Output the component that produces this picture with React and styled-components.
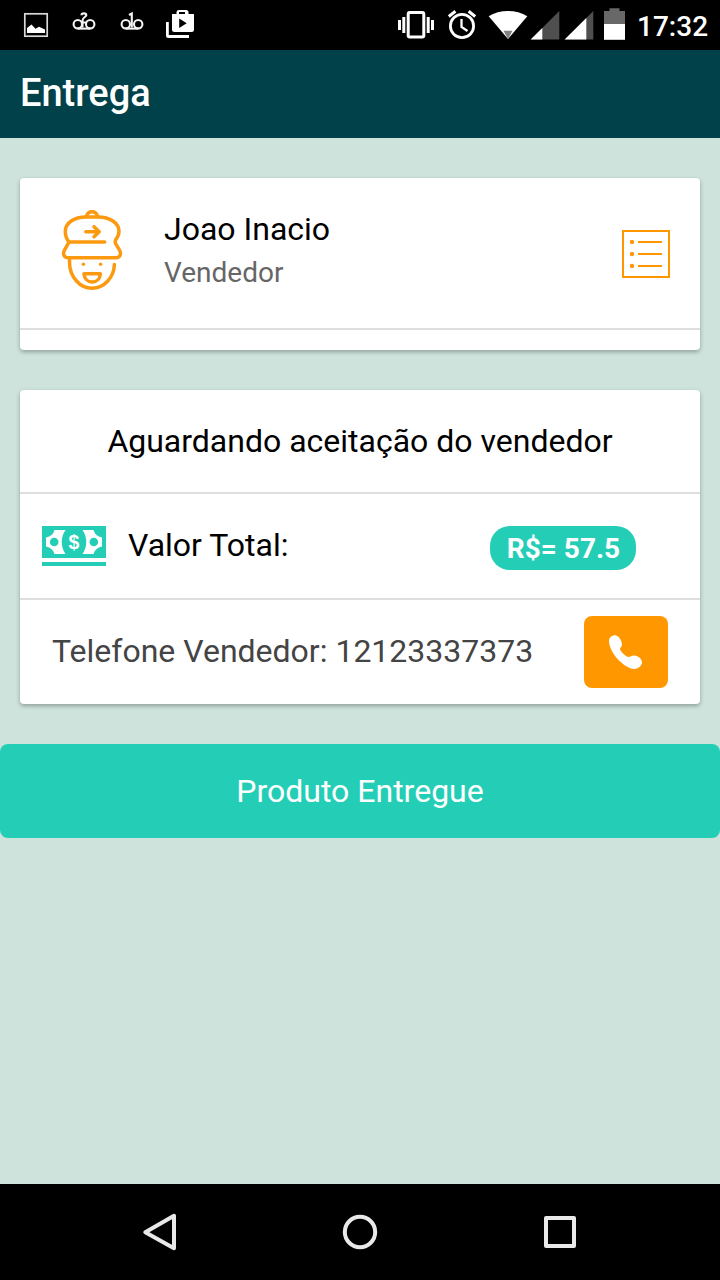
import React from 'react';
import styled, { createGlobalStyle } from 'styled-components';

const teal = '#24ceb6';
const orange = '#ff9800';

const GlobalStyle = createGlobalStyle`
  * {
    box-sizing: border-box;
  }

  body {
    margin: 0;
    font-family: Roboto, sans-serif;
    background: #cee3dc;
  }

  svg {
    display: block;
    flex: none;
  }
`;

const Screen = styled.div`
  display: flex;
  flex-direction: column;
  width: 720px;
  height: 1280px;
  overflow: hidden;
  background: #cee3dc;
`;

const StatusBar = styled.div`
  display: flex;
  justify-content: space-between;
  flex: none;
  height: 50px;
  padding: 0 12px;
  background: #000;
`;

const StatusGroup = styled.div`
  display: flex;
`;

const Clock = styled.time`
  padding-left: 7px;
  width: 78px;
  font-size: 28px;
  font-weight: 500;
  line-height: 53px;
  color: #fff;
  white-space: nowrap;
`;

const Toolbar = styled.header`
  display: flex;
  align-items: center;
  flex: none;
  height: 88px;
  padding: 0 20px;
  background: #014149;
`;

const ToolbarTitle = styled.h1`
  margin: 0;
  padding-bottom: 2px;
  font-size: 38px;
  font-weight: 500;
  color: #fff;
`;

const Content = styled.main`
  flex: 1;
  padding-top: 40px;
`;

const Card = styled.section`
  margin: 0 20px 40px;
  padding-bottom: ${({ $bottom }) => $bottom || 0}px;
  border-radius: 4px;
  background: #fff;
  box-shadow: 0 2px 4px rgba(0, 0, 0, 0.3);
`;

const Item = styled.div`
  display: flex;
  align-items: center;
  height: ${({ $height }) => $height}px;
  padding: ${({ $padding }) => $padding || '0 32px'};
  border-bottom: ${({ $last }) => ($last ? 'none' : '2px solid #dedede')};
`;

const Person = styled.div`
  flex: 1;
  padding: 2px 0 0 40px;
`;

const Name = styled.h2`
  margin: 0;
  font-size: 32px;
  font-weight: 400;
  line-height: 43px;
  color: #000;
`;

const Role = styled.p`
  margin: 0;
  font-size: 28px;
  line-height: 43px;
  color: #666;
`;

const Heading = styled.h2`
  flex: 1;
  margin: 0;
  font-size: 32px;
  font-weight: 400;
  text-align: center;
  color: #000;
`;

const Label = styled.span`
  flex: 1;
  padding-left: ${({ $indent }) => $indent || 0}px;
  padding-bottom: 2px;
  font-size: 32px;
  color: ${({ $color }) => $color || '#000'};
  white-space: nowrap;
`;

const Badge = styled.span`
  width: 146px;
  height: 44px;
  margin-top: 4px;
  padding-left: 1px;
  border-radius: 20px;
  font-size: 28px;
  font-weight: 700;
  line-height: 45px;
  text-align: center;
  color: #fff;
  background: ${teal};
`;

const CallButton = styled.button`
  display: flex;
  align-items: center;
  justify-content: center;
  width: 84px;
  height: 72px;
  padding: 0;
  border: 0;
  border-radius: 8px;
  background: ${orange};
`;

const DeliverButton = styled.button`
  display: block;
  width: 100%;
  height: 94px;
  padding: 0;
  border: 0;
  border-radius: 8px;
  font-family: inherit;
  font-size: 32px;
  color: #fff;
  background: ${teal};
`;

const NavBar = styled.nav`
  display: flex;
  align-items: center;
  justify-content: space-between;
  flex: none;
  height: 96px;
  padding: 0 136px;
  background: #000;
`;

const PictureIcon = () => (
  <svg width="48" height="50">
    <rect x="12.8" y="13.8" width="22.4" height="22.4" fill="none" stroke="#d8d8d8" strokeWidth="1.7" />
    <path d="M15 33V28l4.5-3.5 4 4.2 3.5-2 6 2.8V33z" fill="#fff" />
  </svg>
);

const digits = {
  1: 'M21 15l2.800-1.500v14',
  2: 'M21.500 15.200c0-2.400 4.800-2.400 4.800 0 0 1.800-3.800 2-3.800 5.300v7M22.500 22.500h4',
};

const VoicemailIcon = ({ line }) => (
  <svg width="48" height="50" fill="none" stroke="#f4f4f4" strokeWidth="2.100">
    <circle cx="17.800" cy="24.200" r="4.200" />
    <circle cx="30.200" cy="24.200" r="4.200" />
    <path d="M17.800 28.600h12.400" />
    <path d={digits[line]} />
  </svg>
);

const StoreIcon = () => (
  <svg width="48" height="50" fill="#fff">
    <path
      fillRule="evenodd"
      d="M16 14h4.500v-1.500a2.500 2.500 0 0 1 2.500-2.500h7a2.500 2.500 0 0 1 2.500 2.500V14H38v15.500a2.500 2.500 0 0 1-2.500 2.500h-17a2.500 2.500 0 0 1-2.500-2.500zM23 14h6v-2h-6zM23.200 18.500v9.500l7.500-4.700z"
    />
    <path d="M10 22h2.800v13H33v3H12.500a2.500 2.500 0 0 1-2.500-2.500z" />
  </svg>
);

const VibrateIcon = () => (
  <svg width="48" height="50" fill="#fff">
    <rect x="16.200" y="12.500" width="15.600" height="24.500" rx="1.500" fill="none" stroke="#fff" strokeWidth="3" />
    <path d="M6 20h3v10H6zM10.300 17h3v16h-3zM34.700 17h3v16h-3zM39 20h3v10h-3z" />
  </svg>
);

const AlarmIcon = () => (
  <svg width="44" height="50" fill="none" stroke="#fff">
    <circle cx="22" cy="26" r="11.600" strokeWidth="2.800" />
    <path d="M8.800 16.500l6.600-5.200M35.200 16.500l-6.600-5.200" strokeWidth="3" />
    <path d="M21.500 19v8l6 4" strokeWidth="2.300" />
  </svg>
);

const WifiIcon = () => (
  <svg width="46" height="50">
    <path d="M4.700 16.300C15.500 9.300 32.500 9.300 43.300 16.300L24 39z" fill="#fff" />
    <path d="M19.500 30.800h9L24 39z" fill="#808080" />
  </svg>
);

const SignalIcon = ({ level }) => (
  <svg width="34" height="50">
    <path d="M.7 39.500L29.300 11v28.500z" fill="#4f4f4f" />
    <path d={`M.7 39.500L${level} ${40.2 - level}V39.500z`} fill="#fff" />
  </svg>
);

const BatteryIcon = () => (
  <svg width="32" height="50">
    <path d="M6 11h5.500V8.200h10V11H27v13H6z" fill="#686868" />
    <path d="M6 24h21v15.800H6z" fill="#fff" />
  </svg>
);

const SellerIcon = () => (
  <svg width="64" height="84" fill="none" stroke="#fb9a10" strokeWidth="3.500" strokeLinecap="round" strokeLinejoin="round">
    <path d="M26.500 8.200C28 2.200 36 2.200 37.500 8.200" />
    <path d="M9 34C6.500 31 5.300 27.500 5.300 23.500C5.300 15 14 8.900 26 8.900h12C50 8.900 59 15 59 23.500c0 3.500-1.300 5.500-3.200 8.300-.9 1.400-.9 2.500 0 4L59.500 42.200c2.200 4 .3 7.600-3.800 7.600H8.300c-4.100 0-6-3.600-3.800-7.600z" />
    <path d="M9 34h35.700M25.800 23.700h13.300M34 18.700l5.200 5-5.200 5" />
    <path d="M9.500 51v3C9.500 69 20 80.300 32 80.300S54 69.500 54.400 56.500" />
    <path d="M24 65.800h16.400C40 70.500 37 74 32.200 74S24.400 70.500 24 65.800z" />
    <g fill="#fb9a10" stroke="none">
      <circle cx="23.400" cy="56.300" r="1.700" />
      <circle cx="40.600" cy="56.300" r="1.700" />
    </g>
  </svg>
);

const ListBox = styled.svg`
  margin-top: 8px;
`;

const ListIcon = () => (
  <ListBox width="48" height="48" fill={orange}>
    <rect x="1" y="1" width="46" height="46" fill="none" stroke={orange} strokeWidth="2" />
    {[12, 24, 36].map(y => (
      <g key={y}>
        <circle cx="10" cy={y} r="2.200" />
        <rect x="16" y={y - 1} width="24" height="2" />
      </g>
    ))}
  </ListBox>
);

const CashIcon = () => (
  <svg width="64" height="40" fill={teal}>
    <path d="M0 0h64v32H0zM0 36h64v4H0z" />
    <g fill="#fff">
      <path d="M12.500 4h11c-5 7-5 17 0 24h-11Q11 22 4 20.500v-9Q11 10 12.500 4z" />
      <path d="M51.500 4h-11c5 7 5 17 0 24h11Q53 22 60 20.500v-9Q53 10 51.500 4z" />
      <text x="32" y="22.500" textAnchor="middle" fontFamily="Liberation Sans, sans-serif" fontSize="19.500" fontWeight="700">
        $
      </text>
    </g>
    <circle cx="12.200" cy="16" r="4.300" />
    <circle cx="51.800" cy="16" r="4.300" />
  </svg>
);

const PhoneIcon = () => (
  <svg width="34" height="35" fill="#fff">
    <path d="M0 6C0 2 3.500.3 6.500.3 10 1 13 6 13 9.800c0 2-2 2.700-2 4.200 0 2 6 8 8.500 8 1.500 0 3-1.600 5.500-1.600 3.500 0 8 3.400 8 6.600 0 4-4 7-8 7C16 33.500.5 19 0 6z" />
  </svg>
);

const BackIcon = () => (
  <svg width="48" height="48" fill="none" stroke="#e9e9e9" strokeWidth="4" strokeLinejoin="round">
    <path d="M9.300 24.200L38 7.800v32.400z" />
  </svg>
);

const HomeIcon = () => (
  <svg width="48" height="48" fill="none" stroke="#e9e9e9" strokeWidth="4">
    <circle cx="24" cy="24" r="15.200" />
  </svg>
);

const RecentsIcon = () => (
  <svg width="48" height="48" fill="none" stroke="#e9e9e9" strokeWidth="4" strokeLinejoin="round">
    <rect x="10" y="10" width="28" height="28" />
  </svg>
);

const App = () => {
  const seller = { name: 'Joao Inacio', role: 'Vendedor', phone: '12123337373' };
  const total = 57.5;

  return (
    <Screen>
      <GlobalStyle />
      <StatusBar>
        <StatusGroup>
          <PictureIcon />
          <VoicemailIcon line={2} />
          <VoicemailIcon line={1} />
          <StoreIcon />
        </StatusGroup>
        <StatusGroup>
          <VibrateIcon />
          <AlarmIcon />
          <WifiIcon />
          <SignalIcon level={12.3} />
          <SignalIcon level={22.3} />
          <BatteryIcon />
          <Clock>17:32</Clock>
        </StatusGroup>
      </StatusBar>
      <Toolbar>
        <ToolbarTitle>Entrega</ToolbarTitle>
      </Toolbar>
      <Content>
        <Card $bottom={20}>
          <Item $height={152} $padding="0 30px 6px 40px">
            <SellerIcon />
            <Person>
              <Name>{seller.name}</Name>
              <Role>{seller.role}</Role>
            </Person>
            <ListIcon />
          </Item>
        </Card>
        <Card>
          <Item $height={104}>
            <Heading>Aguardando aceitação do vendedor</Heading>
          </Item>
          <Item $height={106} $padding="0 64px 0 22px">
            <CashIcon />
            <Label $indent={22}>Valor Total:</Label>
            <Badge>R$= {total}</Badge>
          </Item>
          <Item $height={104} $last>
            <Label $color="#444">Telefone Vendedor: {seller.phone}</Label>
            <CallButton aria-label="Ligar">
              <PhoneIcon />
            </CallButton>
          </Item>
        </Card>
        <DeliverButton>Produto Entregue</DeliverButton>
      </Content>
      <NavBar>
        <BackIcon />
        <HomeIcon />
        <RecentsIcon />
      </NavBar>
    </Screen>
  );
};

export default App;
